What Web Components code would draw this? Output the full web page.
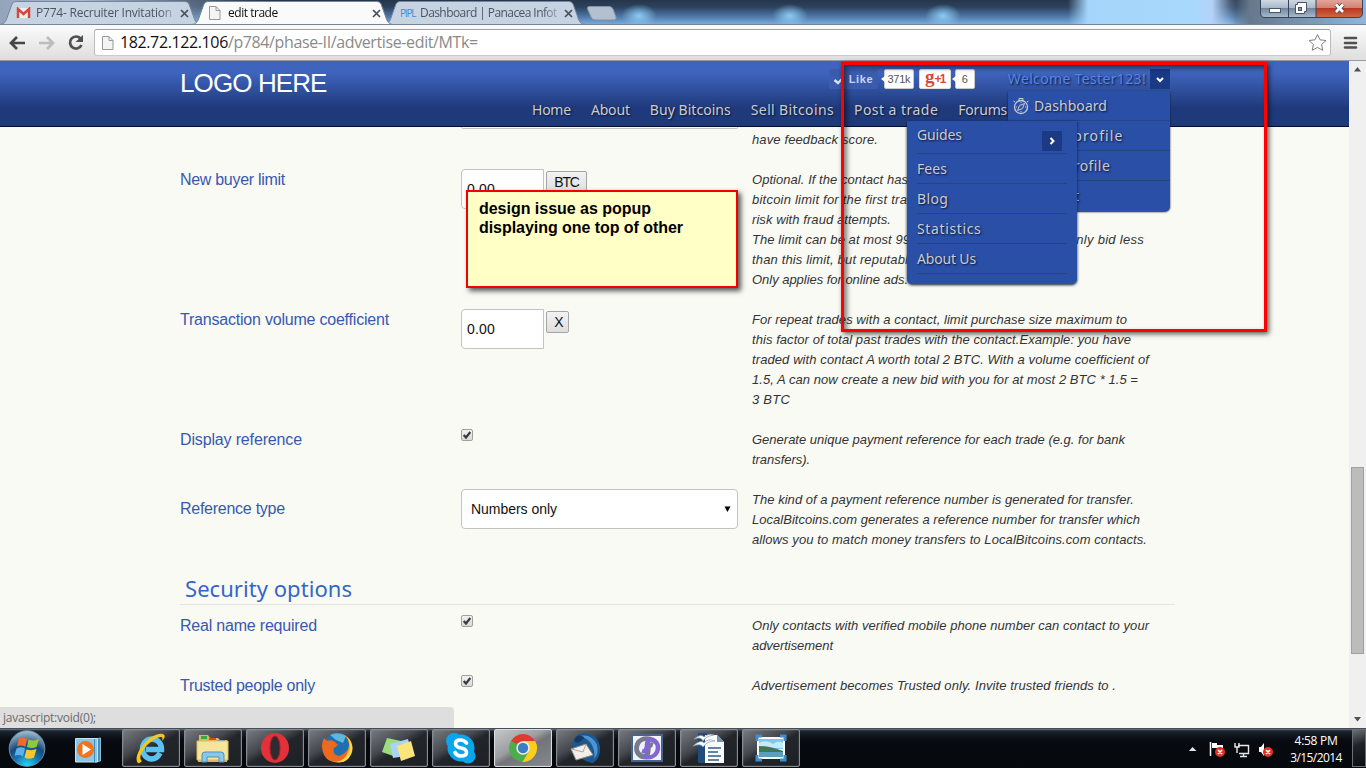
<!DOCTYPE html>
<html lang="en">
<head>
<meta charset="utf-8">
<title>edit trade</title>
<style>
html,body{margin:0;height:100%;overflow:hidden}
body{font-family:"Liberation Sans",Arial,sans-serif}
</style>
</head>
<body>
<desktop-screen></desktop-screen>
<script>
function define(name, html, setup) {
  const t = document.createElement('template');
  t.innerHTML = html;
  customElements.define(name, class extends HTMLElement {
    connectedCallback() {
      if (this.shadowRoot) return;
      const r = this.attachShadow({mode: 'open'});
      const c = t.content.cloneNode(true);
      if (setup) setup(this, c);
      r.appendChild(c);
    }
  });
}

/* ---------- browser chrome ---------- */
define('browser-tab', `<style>
:host{display:block;position:relative;width:202px;height:24px;margin-right:-10px;flex:none;font:12px "Open Sans","Noto Sans",sans-serif;color:#4c5560}
:host([active]){z-index:2;color:#111}
.bg{position:absolute;inset:0}
.row{position:relative;display:flex;align-items:center;height:24px;padding:2px 13px 0 16px;box-sizing:border-box}
.ico{width:16px;height:16px;flex:none;display:flex;align-items:center}
.t{flex:1;padding-left:4px;white-space:nowrap;overflow:hidden;line-height:18px;-webkit-mask-image:linear-gradient(90deg,#000 86%,transparent);mask-image:linear-gradient(90deg,#000 86%,transparent)}
</style>
<svg class="bg" width="202" height="24"><path d="M0 24.500C5 24 6 21 8 15L12 4Q13 1.500 16 1.500H185Q188 1.500 189 4L193 15C195 21 196 24 201 24.500" fill="#c6d3e3" stroke="#75869b"/></svg>
<div class="row"><span class="ico"><slot name="icon"></slot></span><span class="t"><slot></slot></span><svg width="9" height="9" viewBox="0 0 9 9"><path d="M1 1L8 8M8 1L1 8" stroke="#48505a" stroke-width="1.700"/></svg></div>`,
(el, c) => { if (el.hasAttribute('active')) c.querySelector('path').setAttribute('fill', '#fafafa'); });

define('page-icon', `<style>:host{display:block;width:13px;height:16px}svg{display:block}</style>
<svg width="13" height="16"><path d="M1.500 1.500H8L12 5.500V14.500H1.500ZM8 1.500V5.500H12" fill="#f4f4f4" stroke="#989898"/></svg>`);

define('tab-strip', `<style>
:host{display:flex;position:relative;height:24px;
background:radial-gradient(ellipse 18px 12px at 639px 16px,#8ccaf4,transparent),radial-gradient(ellipse 18px 12px at 790px 16px,#8ccaf4,transparent),radial-gradient(ellipse 18px 12px at 943px 16px,#8ccaf4,transparent),
linear-gradient(90deg,transparent 1068px,#a5d5fa 1088px,#a8d8fb 1195px,#b5d2f8 1212px,transparent 1236px),linear-gradient(90deg,#93a4bb 0,#a9b8cb 80px,transparent 260px,transparent 1230px,#66788c 1250px,#8fb6dc 1366px),linear-gradient(#26354a 0,#2d435e 30%,#4d76a5 68%,#78abdc 100%)}
.new{margin:5px 0 0 10px}
.win{position:absolute;right:2px;top:-1px}
.g{color:#3390e8;font:10px "Open Sans"}
</style>
<browser-tab><svg slot="icon" width="15" height="12" viewBox="0 0 15 12"><path d="M1 1H14V11H1Z" fill="#f3eeee"/><path d="M2 11V2L7.500 7L13 2V11" fill="none" stroke="#d7463d" stroke-width="2.500"/></svg><fit-text w="136">P774- Recruiter Invitation</fit-text></browser-tab>
<browser-tab active><page-icon slot="icon"></page-icon><fit-text w="50">edit trade</fit-text></browser-tab>
<browser-tab><fit-text slot="icon" class="g" w="16">PIPL</fit-text><fit-text w="137">Dashboard | Panacea Infot</fit-text></browser-tab>
<svg class="new" width="32" height="17"><path d="M3 1.500H23Q26 1.500 27 4L30 12Q31 15 28 15H9Q6 15 5 12L1.500 4Q1 1.500 3 1.500Z" fill="#b4c0d0" stroke="#8092a8"/></svg>
<svg class="win" width="104" height="20"><defs><linearGradient id="a" y2="1" x2="0"><stop stop-color="#d4dce5"/><stop offset=".48" stop-color="#a9b9ca"/><stop offset=".5" stop-color="#71859c"/><stop offset="1" stop-color="#aabdd0"/></linearGradient><linearGradient id="b" y2="1" x2="0"><stop stop-color="#e4a99c"/><stop offset=".48" stop-color="#d18272"/><stop offset=".5" stop-color="#b93622"/><stop offset="1" stop-color="#d06a40"/></linearGradient></defs>
<path d="M.500 0V14Q.500 18.500 5 18.500H56V0Z" fill="url(#a)"/><path d="M56 0V18.500H98Q102.500 18.500 102.500 14V0Z" fill="url(#b)"/><path d="M.500 0V14Q.500 18.500 5 18.500H98Q102.500 18.500 102.500 14V0M28.500 0V18M56 0V18" fill="none" stroke="#34445b"/>
<rect x="9.500" y="9.500" width="11" height="4" fill="#fff" stroke="#4b5367"/><path d="M37.500 3.500H46.500V12.500H44.500V14.500H35.500V5.500H37.500Z" fill="#fff" stroke="#4b5367"/><rect x="38.500" y="8.500" width="3" height="3" fill="#8595ac" stroke="#4b5367"/>
<path d="M76 5.500L83 13M83 5.500L76 13" stroke="#4b4758" stroke-width="4.500"/><path d="M76 5.500L83 13M83 5.500L76 13" stroke="#fff" stroke-width="2.700"/></svg>`);

define('browser-toolbar', `<style>
:host{display:flex;align-items:center;height:37px;box-sizing:border-box;background:linear-gradient(#fbfbfb,#dedede);border-top:1px solid #75869b;border-bottom:1px solid #999;padding:0 8px 0 8px}
.url{flex:1;display:flex;align-items:center;height:27px;box-sizing:border-box;border:1px solid #aaa;border-color:#a0a0a0 #bbb #ccc;border-radius:3px;background:#fff;margin:0 12px 0 8px;padding:0 3px 0 6px;font:16px "Open Sans","Noto Sans",sans-serif;color:#8a8a8a}
b{font-weight:400;color:#111}.x{flex:1;margin-left:6px;line-height:22px;padding-bottom:1px}
svg{display:block}
</style>
<svg width="78" height="22" viewBox="0 0 78 22"><path d="M3 11H17M9 5L3 11L9 17" fill="none" stroke="#464646" stroke-width="2.700"/><path d="M31 11H45M39 5L45 11L39 17" fill="none" stroke="#bcbcbc" stroke-width="2.700"/><path d="M72.500 6.500A6 6 0 1 0 73.500 13" fill="none" stroke="#505050" stroke-width="2.700"/><path d="M75 3V10H67.500Z" fill="#505050"/></svg>
<div class="url"><page-icon></page-icon><span class="x"><fit-text w="358"><b>182.72.122.106</b>/p784/phase-II/advertise-edit/MTk=</fit-text></span>
<svg width="19" height="19" viewBox="0 0 19 19"><path d="M9.500 1.500L12 6.800L18 7.500L13.600 11.500L14.800 17.300L9.500 14.400L4.200 17.300L5.400 11.500L1 7.500L7 6.800Z" fill="#fff" stroke="#808080" stroke-linejoin="round"/></svg></div>
<svg width="15" height="15"><path d="M2 3H13M2 8H13M2 12.500H13" stroke="#505050" stroke-width="2.600" stroke-linecap="round"/></svg>`);

/* ---------- site header and menus ---------- */
define('count-bubble', `<style>
:host{display:block;position:relative;height:18px;line-height:19px;background:#fff;border:1px solid #c9c9c9;border-radius:2px;color:#555;font-size:11px;text-align:center;box-sizing:content-box}
:host::before{content:"";position:absolute;left:-4px;top:6px;border:solid transparent;border-width:3px 4px 3px 0;border-right-color:#fff}
</style><slot></slot>`);

define('menu-row', `<style>
:host{display:flex;align-items:center;height:30px;box-sizing:border-box;border-bottom:1px solid #274481;white-space:nowrap}
</style><slot></slot>`);

define('user-menu', `<style>
:host{display:block;position:absolute;left:1008px;top:30px;width:162px;height:120px;background:#2a4fa7;border-radius:0 0 5px 5px;box-shadow:0 1px 2px #0a1730}
menu-row{padding-left:26px}
menu-row.first{padding-left:5px}
menu-row.last{border:0}
svg{margin-right:5px}
</style>
<menu-row class="first"><svg width="16" height="18" viewBox="0 0 16 18" fill="none" stroke="#c9ccd4"><circle cx="8" cy="10" r="6.500" stroke-width="1.300"/><path d="M6 1.500H10V3.500H6ZM2 5L0.500 4M14 5L15.500 4M11.500 6.500L9.500 11.500L4.500 13.500L6.500 8.500ZM8 5V6M8 14V15M3 10H4M12 10H13"/></svg><fit-text w="73">Dashboard</fit-text></menu-row>
<menu-row><fit-text w="89">Your profile</fit-text></menu-row>
<menu-row><fit-text w="76">Edit profile</fit-text></menu-row>
<menu-row class="last"><fit-text w="45">Logout</fit-text></menu-row>`);

define('more-menu', `<style>
:host{display:block;position:absolute;left:907px;top:60px;width:170px;height:163px;box-sizing:border-box;padding:0 10px;background:#2a4fa7;border-radius:0 0 5px 5px;box-shadow:0 1px 3px #0a1730}
menu-row.first{height:33px;align-items:flex-start}
.g{margin-top:4px}
.b{width:20px;height:20px;background:#1b3a83;margin:10px 5px 0 auto}
</style>
<menu-row class="first"><fit-text class="g" w="45">Guides</fit-text><svg class="b" viewBox="0 0 20 20"><path d="M8.500 7L11.500 10L8.500 13" fill="none" stroke="#fff" stroke-width="2"/></svg></menu-row>
<menu-row><fit-text w="30">Fees</fit-text></menu-row>
<menu-row><fit-text w="31">Blog</fit-text></menu-row>
<menu-row><fit-text w="64">Statistics</fit-text></menu-row>
<menu-row><fit-text w="59">About Us</fit-text></menu-row>`);

define('site-header', `<style>
:host{display:block;position:relative;z-index:2;height:66px;box-sizing:border-box;border-bottom:1px solid #030d2c;background:linear-gradient(#3f64bd 0,#3f64bd 18%,#1f3a7b 72%,#1f3a7b);color:#ccc;font:14px/20px "Noto Sans","Open Sans",sans-serif;text-shadow:1px 1px 2px #071333}
.in{padding-left:180px;width:990px;display:grid;grid-template-columns:1fr auto;grid-template-rows:37px 28px;height:65px}
.logo{font:26px/30px "Liberation Sans";color:#fff;text-shadow:none;margin-top:7px}
.top{display:flex;height:20px;margin-top:8px;font-family:"Liberation Sans";text-shadow:none}
.like{display:flex;align-items:center;width:49px;height:20px;background:#3b5cae;color:#cbd6ee;font:bold 11px "Liberation Sans";border-radius:2px}
.like svg{margin:2px 5px 0 4px}
.g{width:30px;height:18px;border:1px solid #ddd;border-radius:2px;background:#fff;color:#d64937;display:flex;align-items:center;justify-content:center;font:bold 12px "Liberation Sans"}
.g b{font:bold 19px/15px "Liberation Serif";margin-top:-5px}
.w{color:#5586ee;margin-left:33px;font:14px/20px "Noto Sans";text-shadow:1px 1px 2px #071333}
.dd{width:20px;height:20px;background:#1a3a86;margin-left:4px}
nav{grid-column:1/3;display:flex;gap:20px;padding-left:352px;margin-top:2px;height:20px;white-space:nowrap}
</style>
<div class="in"><div class="logo"><fit-text w="147">LOGO HERE</fit-text></div>
<div class="top"><span class="like"><svg width="11" height="9"><path d="M1.500 4L5 7L10 2" fill="none" stroke="#d9e1f3" stroke-width="2.400"/></svg><fit-text w="24">Like</fit-text></span><count-bubble style="width:28px;margin:0 5px 0 6px"><fit-text w="23">371k</fit-text></count-bubble><span class="g"><b>g</b><fit-text w="11">+1</fit-text></span><count-bubble style="width:18px;margin-left:4px">6</count-bubble><fit-text class="w" w="138">Welcome Tester123!</fit-text><svg class="dd" viewBox="0 0 20 20"><path d="M7 9L10 12L13 9" fill="none" stroke="#fff" stroke-width="2"/></svg></div>
<nav><fit-text w="39">Home</fit-text><fit-text w="39">About</fit-text><fit-text w="81">Buy Bitcoins</fit-text><fit-text w="83">Sell Bitcoins</fit-text><fit-text w="84">Post a trade</fit-text><fit-text w="49">Forums</fit-text></nav></div>
<user-menu></user-menu><more-menu></more-menu>`);

/* ---------- trade form ---------- */
define('form-row', `<style>
:host{display:grid;grid-template-columns:281px 291px 420px;margin-bottom:20px;align-items:start}
.l{color:#3659af;font-size:16px;height:19px;padding-top:1px;line-height:20px}
:host([middle]) .l{padding-top:10px}
.f{height:20px;display:flex;align-items:flex-start}
.h{font:italic 13px/20px "Liberation Sans";color:#333;min-height:20px;white-space:nowrap}
::slotted(p){margin:0;display:flex;height:19px;padding-top:1px}
</style><div class="l"><slot name="label"></slot></div><div class="f"><slot name="field"></slot></div><div class="h"><slot></slot></div>`);

define('check-box', `<style>:host{display:block;width:12px;height:12px}svg{display:block}</style>
<svg width="12" height="13"><defs><linearGradient id="c" x2="0" y2="1"><stop stop-color="#f2f2f2"/><stop offset="1" stop-color="#d9d9d9"/></linearGradient></defs><rect x=".500" y=".500" width="11" height="11" rx="1.500" fill="url(#c)" stroke="#a0a0a0"/><path d="M2.700 6L5 8.500L9.300 3" fill="none" stroke="#3b3b3b" stroke-width="2.200"/></svg>`);

define('amount-field', `<style>
:host{display:flex;align-items:flex-start;font-size:14px;color:#111}
.i{width:83px;height:40px;box-sizing:border-box;border:1px solid #c3c3c3;border-radius:4px 0 0 4px;background:#fff;padding-left:5px;line-height:38px}
.b{margin:2px 0 0 2px;height:22px;box-sizing:border-box;border:1px solid #a5a5a5;border-radius:2px;background:linear-gradient(#f3f3f3,#dedede);font-size:14px;line-height:20px;text-align:center}
</style><div class="i"><fit-text w="28">0.00</fit-text></div><div class="b"><slot></slot></div>`,
(el, c) => { c.querySelector('.b').style.width = el.getAttribute('bw') + 'px'; });

define('select-field', `<style>
:host{display:flex;align-items:center;justify-content:space-between;width:277px;height:40px;box-sizing:border-box;border:1px solid #c3c3c3;border-radius:4px;background:#fff;padding:0 6px 0 9px;font-size:14px;color:#111}
</style><slot></slot><svg width="7" height="7"><path d="M0.500 .500H6.500L3.500 6Z" fill="#000"/></svg>`);

define('trade-form', `<style>
:host{display:block;padding-left:180px;height:601px;overflow:hidden;background:#fafaf5}
.top{height:42px;display:grid;grid-template-columns:281px 291px 420px}
.prev{width:277px;height:2px;box-sizing:border-box;border:1px solid #c3c3c3;border-top:0;border-radius:0 0 4px 4px}
.top p{margin:3px 0 0;font:italic 13px/20px "Liberation Sans";color:#333}
.btw{width:392px;justify-content:space-between}
h2{margin:-20px 0 10px;width:995px;height:56px;box-sizing:border-box;border-bottom:1px solid #e2e2df;font:400 22px/32px "Noto Sans","Open Sans",sans-serif;color:#3366cc;padding:23px 0 0 5px}
</style>
<div class="top"><span></span><div class="prev"></div><p><fit-text w="126">have feedback score.</fit-text></p></div>
<form-row><fit-text slot="label" w="105">New buyer limit</fit-text><amount-field slot="field" bw="41"><fit-text w="25">BTC</fit-text></amount-field>
<p><fit-text w="156">Optional. If the contact has</fit-text></p><p><fit-text w="155">bitcoin limit for the first tra</fit-text></p><p><fit-text w="139">risk with fraud attempts.</fit-text></p><p class="btw"><fit-text w="158">The limit can be at most 99</fit-text><fit-text w="75">only bid less</fit-text></p><p><fit-text w="156">than this limit, but reputabl</fit-text></p><p><fit-text w="156">Only applies for online ads.</fit-text></p></form-row>
<form-row><fit-text slot="label" w="209">Transaction volume coefficient</fit-text><amount-field slot="field" bw="23"><fit-text w="8">X</fit-text></amount-field>
<p><fit-text w="375">For repeat trades with a contact, limit purchase size maximum to</fit-text></p><p><fit-text w="379">this factor of total past trades with the contact.Example: you have</fit-text></p><p><fit-text w="397">traded with contact A worth total 2 BTC. With a volume coefficient of</fit-text></p><p><fit-text w="386">1.5, A can now create a new bid with you for at most 2 BTC * 1.5 =</fit-text></p><p><fit-text w="38">3 BTC</fit-text></p></form-row>
<form-row><fit-text slot="label" w="122">Display reference</fit-text><check-box slot="field"></check-box>
<p><fit-text w="373">Generate unique payment reference for each trade (e.g. for bank</fit-text></p><p><fit-text w="58">transfers).</fit-text></p></form-row>
<form-row middle><fit-text slot="label" w="105">Reference type</fit-text><select-field slot="field"><fit-text w="86">Numbers only</fit-text></select-field>
<p><fit-text w="382">The kind of a payment reference number is generated for transfer.</fit-text></p><p><fit-text w="388">LocalBitcoins.com generates a reference number for transfer which</fit-text></p><p><fit-text w="395">allows you to match money transfers to LocalBitcoins.com contacts.</fit-text></p></form-row>
<h2><fit-text w="167">Security options</fit-text></h2>
<form-row><fit-text slot="label" w="137">Real name required</fit-text><check-box slot="field"></check-box>
<p><fit-text w="397">Only contacts with verified mobile phone number can contact to your</fit-text></p><p><fit-text w="81">advertisement</fit-text></p></form-row>
<form-row><fit-text slot="label" w="135">Trusted people only</fit-text><check-box slot="field"></check-box>
<p><fit-text w="364">Advertisement becomes Trusted only. Invite trusted friends to .</fit-text></p></form-row>`);

define('scroll-bar', `<style>
:host{display:flex;flex-direction:column;align-items:center;width:17px;height:667px;background:#f0f0f0}
i{width:13px;height:187px;box-sizing:border-box;background:#bcbcbc;border:1px solid #a0a0a0;margin-top:395px}
svg{margin-top:6px}.d{margin:auto 0 6px}
</style><svg width="7" height="5"><path d="M0 4.500L3.500 0L7 4.500Z" fill="#505050"/></svg><i></i><svg class="d" width="7" height="5"><path d="M0 0L3.500 4.500L7 0Z" fill="#505050"/></svg>`);

/* ---------- taskbar ---------- */
define('task-button', `<style>
:host{display:flex;align-items:center;justify-content:center;width:58px;height:38px;box-sizing:border-box;border:1px solid #878b90;border-radius:2px;background:linear-gradient(150deg,#777b80 0,#45494f 38%,#22262b 52%,#1d2126 100%);box-shadow:inset 0 0 1px #c5c8cc}
:host([active]){background:linear-gradient(150deg,#c5c6c8,#9b9da0 42%,#717478 54%,#85888c);border-color:#dcdcdc}
</style><slot></slot>`);

define('task-bar', `<style>
:host{display:flex;height:40px;box-sizing:border-box;position:relative;background:linear-gradient(#1d2631 0,#6c7886 1px,#1c242e 3px,#070b11 30%,#05080c);padding-top:1px}
.orb{margin:1px 0 0 8px}.wmp{margin:8px 0 0 29px}
.apps{display:flex;gap:4px;margin-left:20px}
.tray{margin:12px 0 0 auto}
.clock{width:64px;margin:3px 4px 0 9px;color:#fff;font:12px/17px "Open Sans",sans-serif;text-align:center}
.show{width:14px;height:38px;box-sizing:border-box;border:1px solid #6c7075;background:linear-gradient(160deg,#6c7075,#1f2327 42%,#0c0f12)}
</style>
<svg class="orb" width="38" height="38" viewBox="0 0 38 38"><defs><radialGradient id="o" cx=".5" cy="1" r="1"><stop stop-color="#22e0ff"/><stop offset=".35" stop-color="#1479b4"/><stop offset=".6" stop-color="#174a78"/><stop offset="1" stop-color="#a8c3d6"/></radialGradient></defs><circle cx="19" cy="18.500" r="17.800" fill="url(#o)" stroke="#6e93ac"/><path d="M11 8Q15 6 19 9L17.500 17Q13 14.500 9 16.500Z" fill="#ee6a2d"/><path d="M20.500 9.500Q26 11.500 31 9L28.500 17Q24 19 19 17Z" fill="#92c83e"/><path d="M8.500 18.500Q13 16 17 18.500L15 26.500Q11 24 6.500 26Z" fill="#59b2ee"/><path d="M18.500 19.500Q24 21 28.500 19L26 27.500Q21 30 16.500 27.500Z" fill="#fcc52e"/></svg>
<svg class="wmp" width="27" height="26"><path d="M20 2L25.500 1V24L20 25Z" fill="#3f8fbe" stroke="#a9d8ee" stroke-width=".8"/><path d="M.500 1.500H22.500V25H.500Z" fill="#8cc6e4" stroke="#c4e6f5"/><path d="M19.500 2V25" stroke="#3f8fbe"/><circle cx="10.500" cy="12.500" r="8.500" fill="#f0731e"/><path d="M7.500 7L16 12.500L7.500 18Z" fill="#fff"/></svg>
<div class="apps">
<task-button><svg width="32" height="32" viewBox="0 0 32 32"><path d="M25 21Q22 27 16.500 27A9.500 10 0 1 1 26.500 17.500H11" fill="none" stroke="#5bc2f2" stroke-width="5.500"/><path d="M3 31C-3 25 11 4 24 2C31 1 31 5 27 9C29 4 25 4 20 7C9 13 2 26 7 29Q4 32 3 31Z" fill="#f6c61b"/></svg></task-button>
<task-button><svg width="34" height="32" viewBox="0 0 34 32"><path d="M3 3H12L14 6H22L24 8H31V30H2Z" fill="#d9b958"/><path d="M5 4H11V7H5Z" fill="#3aa64a"/><path d="M13 6H20V8H13Z" fill="#d9492f"/><path d="M21 8H29V10H21Z" fill="#3597dc"/><path d="M1 9H32V28H1Z" fill="#f6e49c" stroke="#dcbc5d"/><path d="M6 30V23Q6 20 9 20H25Q28 20 28 23V30H23V25H11V30Z" fill="#8cc7e8" stroke="#4992bd"/></svg></task-button>
<task-button><svg width="30" height="32" viewBox="0 0 30 32"><ellipse cx="15" cy="16" rx="14" ry="15" fill="#e3313a"/><ellipse cx="15" cy="16" rx="5" ry="12" fill="#302b2e" stroke="#a51c28" stroke-width="1"/></svg></task-button>
<task-button><svg width="32" height="32" viewBox="0 0 32 32"><circle cx="17" cy="16" r="14.500" fill="#f7a51e"/><circle cx="16" cy="13" r="12" fill="#1f6eb1"/><path d="M9 3Q17-1 25 4L22 11L15 8Z" fill="#5fb6df"/><path d="M3 6L6 9Q10 7 14 10L17 13L13 16Q11 23 18 24Q24 22 27 17Q26 27 18 29Q8 32 3 23Q-1 14 3 6Z" fill="#ec6a20"/><path d="M26 5Q31 12 28 20Q24 28 16 30Q26 32 30 22Q34 13 26 5Z" fill="#fdd64b"/></svg></task-button>
<task-button><svg width="34" height="32" viewBox="0 0 34 32"><path d="M5 6L19 9L14 25L0 20Z" fill="#9bdc7e"/><path d="M8 12L26 7L30 23L11 26Z" fill="#aad3f5"/><path d="M15 14L29 9L33 24L19 29Z" fill="#fbe47b"/></svg></task-button>
<task-button><svg width="32" height="32" viewBox="0 0 32 32"><circle cx="9" cy="9" r="8" fill="#0aa6ec"/><circle cx="23" cy="24" r="7.500" fill="#0aa6ec"/><circle cx="16" cy="16" r="13.500" fill="#0aa6ec"/><path d="M21.500 11Q19 8 15.500 8Q10.500 8 10.500 11.500Q10.500 15 16 16Q21.500 17 21.500 20.500Q21.500 24 16 24Q12 24 10 20.500" fill="none" stroke="#fff" stroke-width="3.600" stroke-linecap="round"/></svg></task-button>
<task-button active><svg width="30" height="30" viewBox="0 0 30 30"><path d="M15 15L2.900 8A14 14 0 0 1 27.100 8Z" fill="#dd3b2d"/><path d="M15 15L2.900 8A14 14 0 0 0 15 29L21 18Z" fill="#4bad4c"/><path d="M15 8H27.100A14 14 0 0 1 14.500 29L21 18Z" fill="#fcce1c"/><circle cx="15" cy="15" r="6.700" fill="#f1f1f1"/><circle cx="15" cy="15" r="5.200" fill="#3a7ec6"/></svg></task-button>
<task-button><svg width="32" height="32" viewBox="0 0 32 32"><path d="M3 14Q5 2 14 1Q29 1 31 15Q32 26 24 31Q12 30 3 14Z" fill="#1c5792"/><path d="M10 4Q23 1 28 13Q30 22 25 27Q27 18 21 10Q16 5 10 4Z" fill="#4a95d3"/><path d="M2 17L17 12L24 23L7 28Z" fill="#f2eee9" stroke="#938b84"/><path d="M2 17L14 20L17 12" fill="none" stroke="#aaa"/><path d="M7 5Q3 9 8 11Q14 9 15 5Q10 2 7 5" fill="#163a63"/></svg></task-button>
<task-button><svg width="32" height="28"><rect x="1" y="1" width="30" height="26" fill="#f0f3fa" stroke="#46648f" stroke-width="2"/><path d="M20 5.500C6 1 1 17 10 22C14 24 17 21 17 17C17 12 19 10 22 11" fill="none" stroke="#77798c" stroke-width="5"/><path d="M12 22.500C27 27 31 11 23 6.500C19 4 16 7 16 11C16 16 14 18 11 17" fill="none" stroke="#8365d4" stroke-width="4.500"/></svg></task-button>
<task-button><svg width="32" height="32" viewBox="0 0 32 32"><path d="M5 1H14V31H5Z" fill="#214b78"/><path d="M12 3H24L31 10V31H12Z" fill="#fafafa"/><path d="M24 3V10H31Z" fill="#7892a9"/><path d="M15 16H28M15 20H25M15 24H28M15 28H26" stroke="#325f89" stroke-width="1.700"/><path d="M1 7Q8 1 11 5Q15 1 21 3Q13 4 10 9Q8 4 1 7M0 14Q8 7 11 11Q15 6 22 9Q14 9 10 15Q8 11 0 14" fill="#fff" stroke="#879cb0" stroke-width=".7"/></svg></task-button>
<task-button><svg width="32" height="28"><rect x="2" y="3" width="28" height="22" fill="#f8fbfd"/><path d="M4 5H28V15H4Z" fill="#7fc6ef"/><path d="M4 9Q12 5 18 10Q23 6 28 9V14H4Z" fill="#c9e8f8"/><path d="M4 12Q14 12 28 17V19H4Z" fill="#3f7953"/><path d="M4 18H28V23H4Z" fill="#5aa0bd"/><path d="M2 7V2H7M25 2H30V7M30 21V26H25M7 26H2V21" fill="none" stroke="#408bca" stroke-width="3"/></svg></task-button>
</div>
<svg class="tray" width="86" height="18" viewBox="0 0 86 18"><path d="M0 10L3.500 6L7.500 10Z" fill="#e2e4e8"/><path d="M21.500 1V15" stroke="#fff" stroke-width="1.500"/><path d="M23 2H28V4H34V9H28V7H23Z" fill="#fff"/><path d="M46 2V6H50V2M48 6V12M49 4.500H59.500V12.500H50M54.500 12V15M51 15.500H58" fill="none" stroke="#e8e8e8" stroke-width="1.400"/><path d="M70 6H72L75 2V15L72 11H70Z" fill="#fff"/><circle cx="31" cy="11" r="5" fill="#dc3123"/><circle cx="79" cy="11" r="5" fill="#dc3123"/><path d="M29 9L33 13M33 9L29 13M77 9L81 13M81 9L77 13" stroke="#fff" stroke-width="1.700"/></svg>
<div class="clock"><fit-text w="43">4:58 PM</fit-text><br><fit-text w="52">3/15/2014</fit-text></div><div class="show"></div>`);

/* ---------- annotations and screen ---------- */
define('note-box', `<style>
:host{display:block;position:absolute;z-index:9;left:466px;top:190px;width:272px;height:98px;box-sizing:border-box;border:2px solid #f00000;background:#ffffc6;box-shadow:3px 3px 5px #555;padding:7px 11px;font:bold 16px/19px "Liberation Sans";color:#000}
</style><fit-text w="172">design issue as popup</fit-text><br><fit-text w="204">displaying one top of other</fit-text>`);

define('highlight-frame', `<style>
:host{display:block;position:absolute;z-index:8;left:841px;top:62px;width:426px;height:270px;box-sizing:border-box;border:3px solid red;box-shadow:2px 2px 5px rgba(0,0,0,.65),inset 3px 3px 5px rgba(0,0,0,.5)}
</style>`);

define('status-bubble', `<style>
:host{display:flex;align-items:center;position:absolute;z-index:3;left:0;top:707px;width:454px;height:21px;box-sizing:border-box;background:#dedede;border-radius:0 4px 0 0;padding-left:3px;font:12px "Open Sans",sans-serif;color:#6b6b6b}
</style><fit-text w="93">javascript:void(0);</fit-text>`);

define('desktop-screen', `<style>
:host{display:grid;grid-template-rows:24px 37px 667px 40px;position:relative;width:1366px;height:768px;overflow:hidden}
.view{display:grid;grid-template-columns:1349px 17px}
</style><tab-strip></tab-strip><browser-toolbar></browser-toolbar><div class="view"><main><site-header></site-header><trade-form></trade-form></main><scroll-bar></scroll-bar></div><task-bar></task-bar><status-bubble></status-bubble><highlight-frame></highlight-frame><note-box></note-box>`);

/* Tracks its text so that it spans the width given in "w". Defined last, once every host is laid out. */
customElements.define('fit-text', class extends HTMLElement {
  connectedCallback() {
    if (this.shadowRoot) return;
    this.attachShadow({mode: 'open'}).innerHTML = '<style>:host{display:inline-block;white-space:nowrap;flex:none}</style><slot></slot>';
    this.style.letterSpacing = '0';
    const w = this.getBoundingClientRect().width, n = this.textContent.length;
    if (w) this.style.letterSpacing = ((this.getAttribute('w') - w) / (n - 0.5)).toFixed(3) + 'px';
  }
});
</script>
</body>
</html>
